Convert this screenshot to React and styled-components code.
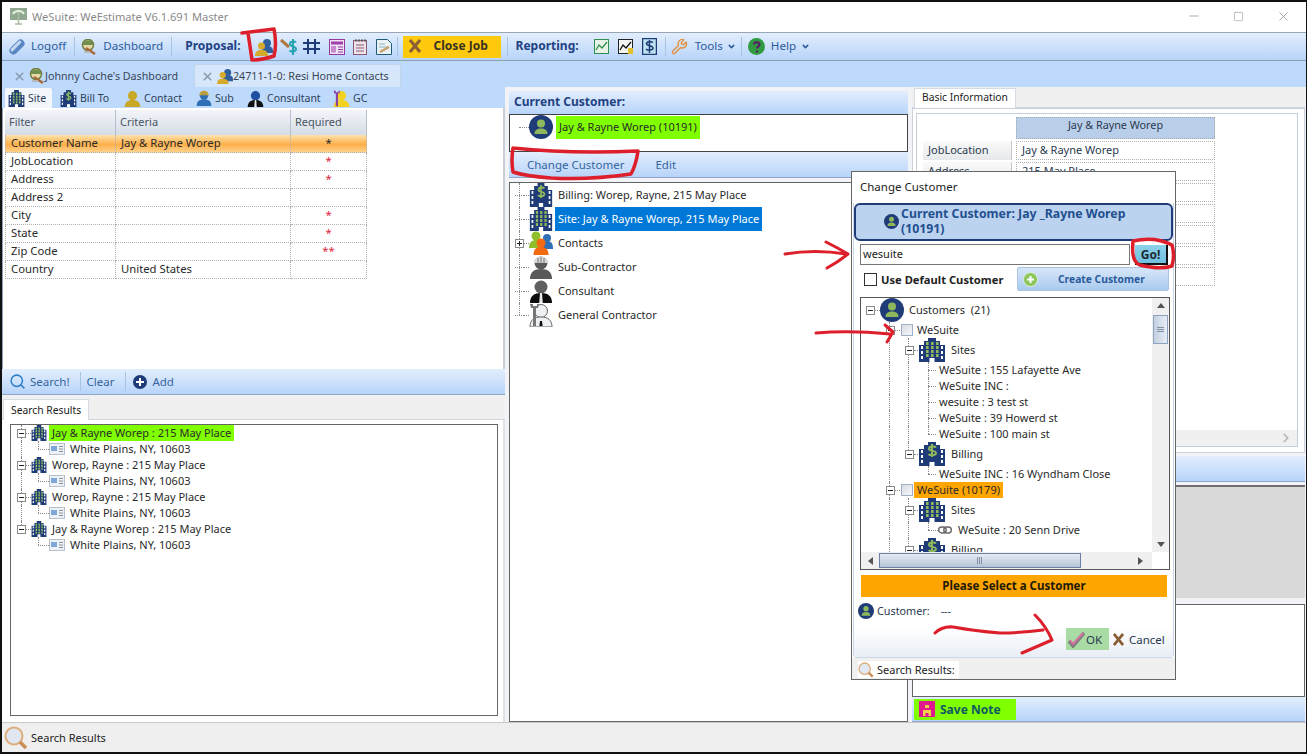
import React from "react";
import styled, { createGlobalStyle } from "styled-components";
import { X, Minus, Square, Search, Wrench, ChevronRight, ChevronDown } from "lucide-react";

const GlobalStyle = createGlobalStyle`
  html, body { margin: 0; padding: 0; background: #fff; overflow: hidden; }
  * { box-sizing: border-box; }
  body { font-family: "Noto Sans", "Open Sans", sans-serif; font-size: 11px; color: #222; }
`;

const NAVY = "#1f3c78";
const LEAF = "#8fb85c";
const BAR = "linear-gradient(#e2eefd, #b8d4fa)";

const Page = styled.div`
  position: relative;
  width: 1307px;
  height: 754px;
  display: flex;
  flex-direction: column;
  border: 2px solid #111;
  border-right-width: 1px;
  background: #f0f0f0;
  overflow: hidden;
`;

const TitleBar = styled.div`
  height: 30px;
  flex: none;
  display: flex;
  align-items: center;
  padding: 0 0 2px 8px;
  background: #fff;
  color: #8a8a8a;
  font-size: 11.1px;
`;
const TitleText = styled.span`margin-left: 5px; flex: 1;`;
const WinButton = styled.span`
  width: 45px;
  display: flex;
  justify-content: center;
  color: #777;
`;

const Toolbar = styled.div`
  height: 29px;
  flex: none;
  display: flex;
  align-items: center;
  padding-left: 6px;
  border-top: 1px solid #97a5b5;
  border-bottom: 1px solid #8e9fb3;
  background: ${BAR};
`;
const Slot = styled.span`
  display: inline-flex;
  flex: none;
  margin-left: ${(p) => p.$ml || 0}px;
`;
const ToolLabel = styled.span`
  flex: none;
  margin-left: ${(p) => p.$ml || 0}px;
  padding-bottom: 2px;
  color: ${(p) => (p.$bold ? "#1f4283" : "#2c5b9b")};
  font-weight: ${(p) => (p.$bold ? 700 : 400)};
  font-size: ${(p) => (p.$bold ? 12 : 11.6)}px;
`;
const Sep = styled.span`
  width: 1px;
  height: 19px;
  flex: none;
  margin-left: ${(p) => p.$ml || 0}px;
  background: #a9c3e2;
`;
const CloseJob = styled.div`
  width: 98px;
  height: 22px;
  flex: none;
  margin-left: ${(p) => p.$ml || 0}px;
  display: flex;
  align-items: center;
  gap: 13px;
  padding: 0 0 2px 6px;
  background: #ffc90e;
  color: #3a3320;
  font-weight: 700;
  font-size: 12px;
`;

const DocTabs = styled.div`
  height: 26px;
  flex: none;
  display: flex;
  align-items: flex-end;
  padding-left: 10px;
  background: #bddafd;
`;
const DocTab = styled.div`
  display: flex;
  align-items: center;
  height: 23px;
  width: ${(p) => p.$w}px;
  padding-left: ${(p) => p.$pad || 0}px;
  white-space: nowrap;
  font-size: 10.7px;
  color: #3a4658;
  background: ${(p) => (p.$active ? "#d6e6fb" : "transparent")};
  border-radius: 3px 3px 0 0;
  border: ${(p) => (p.$active ? "1px solid #c3d5ea" : "1px solid transparent")};
  border-bottom: 0;
`;

const Main = styled.div`
  flex: 1;
  min-height: 0;
  display: flex;
  background: #f1f3f6;
`;
const LeftCol = styled.div`
  width: 503px;
  flex: none;
  display: flex;
  flex-direction: column;
`;
const MidCol = styled.div`
  width: 399px;
  flex: none;
  margin-left: 4px;
  padding-top: 4px;
  display: flex;
  flex-direction: column;
`;
const RightCol = styled.div`
  width: 393px;
  flex: none;
  margin-left: 4px;
  display: flex;
  flex-direction: column;
`;

const SubTabs = styled.div`
  height: 21px;
  flex: none;
  display: flex;
  align-items: flex-end;
  padding-left: 3px;
  background: #bddafd;
`;
const SubTab = styled.div`
  height: 20px;
  display: flex;
  align-items: center;
  gap: 3px;
  width: ${(p) => p.$w}px;
  padding-left: 3px;
  margin-left: ${(p) => p.$ml || 0}px;
  color: #2d3e55;
  font-size: 10.5px;
  background: ${(p) => (p.$active ? "#f3f7fc" : "transparent")};
  border-radius: 2px 2px 0 0;
`;
const FilterPanel = styled.div`
  height: 261px;
  flex: none;
  padding: 2px 0 0 2px;
  background: #fff;
  border-left: 1px solid #8fa0b5;
  border-right: 2px solid #c8ced6;
`;
const GridTable = styled.div`
  width: 362px;
  display: grid;
  grid-template-columns: 111px 175px 76px;
  grid-template-rows: 25px;
  grid-auto-rows: 18px;
`;
const HeadCell = styled.div`
  display: flex;
  align-items: center;
  padding: 0 0 2px 4px;
  color: #4a5566;
  font-size: 11px;
  background: linear-gradient(#f3f5f9, #d5dce6);
  border-right: 1px solid #b6bfcb;
`;
const Cell = styled.div`
  display: flex;
  align-items: center;
  justify-content: ${(p) => (p.$center ? "center" : "flex-start")};
  padding: 0 0 2px ${(p) => (p.$center ? 0 : 5)}px;
  font-size: 11.3px;
  color: ${(p) => (p.$red ? "#e0243c" : "#2a2a2a")};
  background: ${(p) => (p.$on ? "linear-gradient(#fde3ae, #fdb04a 55%, #fdd08b)" : "#fff")};
  border-right: 1px dotted #b0b0b0;
  border-bottom: 1px dotted #b0b0b0;
  &:nth-child(3n + 1) { border-left: 1px dotted #b0b0b0; }
`;

const BlueBar = styled.div`
  height: ${(p) => p.$h || 26}px;
  flex: none;
  margin-top: ${(p) => p.$mt || 0}px;
  display: flex;
  align-items: center;
  padding-left: ${(p) => p.$pad || 0}px;
  background: ${BAR};
  border-bottom: 1px solid #8ea7c8;
`;
const BarLink = styled.span`
  margin-left: ${(p) => p.$ml || 0}px;
  color: #35669f;
  font-size: 11.5px;
`;
const TabStrip = styled.div`
  height: ${(p) => p.$h || 25}px;
  flex: none;
  display: flex;
  align-items: flex-end;
  padding-left: ${(p) => p.$pad || 0}px;
  background: #f0f0f0;
  border-bottom: 1px solid #cfd6de;
`;
const PlainTab = styled.div`
  height: ${(p) => p.$h || 21}px;
  display: flex;
  align-items: center;
  padding: 0 7px ${(p) => (p.$h ? 3 : 0)}px;
  margin-bottom: -1px;
  color: #222;
  font-size: 10.3px;
  background: #fff;
  border: 1px solid #d5dbe2;
  border-bottom: 0;
`;
const ResultsPanel = styled.div`
  flex: 1;
  min-height: 0;
  display: flex;
  padding: 4px 5px 6px 8px;
  background: #fff;
  border-right: 2px solid #dfe3e8;
`;
const TreeBox = styled.div`
  flex: 1;
  min-width: 0;
  overflow: hidden;
  background: #fff;
  border: 1px solid #666;
`;

const Row = styled.div`
  position: relative;
  height: ${(p) => p.$h}px;
  display: flex;
  align-items: center;
  padding-left: ${(p) => p.$indent}px;
  white-space: pre;
  font-size: 11px;
  color: #2a2a2a;
`;
const Guide = styled.i`
  position: absolute;
  left: ${(p) => p.$x}px;
  top: 0;
  height: ${(p) => (p.$half ? "50%" : "100%")};
  border-left: 1px dotted #888;
`;
const Expander = styled.span`
  position: relative;
  width: 9px;
  height: 9px;
  flex: none;
  background: #fff;
  border: 1px solid #8a8a8a;
  &::before {
    content: "";
    position: absolute;
    left: 1px;
    right: 1px;
    top: 3px;
    height: 1px;
    background: #222;
  }
  &::after {
    content: "";
    display: ${(p) => (p.$closed ? "block" : "none")};
    position: absolute;
    top: 1px;
    bottom: 1px;
    left: 3px;
    width: 1px;
    background: #222;
  }
`;
const Stub = styled.span`
  width: ${(p) => p.$w}px;
  flex: none;
  border-bottom: 1px dotted #888;
`;
const NodeLabel = styled.span`
  display: flex;
  align-items: center;
  flex: none;
  height: ${(p) => p.$lh || 16}px;
  margin-left: ${(p) => p.$ml ?? 1}px;
  padding: 0 3px 2px;
  background: ${(p) => p.$bg || "transparent"};
  color: ${(p) => p.$color || "inherit"};
`;
const RowIcon = styled.span`
  display: inline-flex;
  flex: none;
  margin-left: ${(p) => p.$ml || 0}px;
`;
const TreeCheck = styled.span`
  width: 12px;
  height: 12px;
  flex: none;
  margin-left: 1px;
  background: linear-gradient(135deg, #d8dce2, #f6f7f9);
  border: 1px solid #9fb0c8;
`;

const CurrentHead = styled.div`
  height: 23px;
  flex: none;
  display: flex;
  align-items: center;
  padding: 0 0 2px 5px;
  background: ${BAR};
  color: #1f4283;
  font-weight: 700;
  font-size: 12px;
  border-radius: 3px 3px 0 0;
`;
const CurrentBox = styled.div`
  height: 38px;
  flex: none;
  background: #fff;
  border: 1px solid #444;
`;
const TabGap = styled.div`
  height: 4px;
  flex: none;
`;

const BasicPanel = styled.div`
  height: 345px;
  flex: none;
  padding: 4px 6px 5px 3px;
  background: #fff;
  border: 1px solid #c9d2da;
`;
const BasicInner = styled.div`
  height: 100%;
  display: flex;
  flex-direction: column;
  border: 1px solid #c3d0db;
`;
const BasicBody = styled.div`
  flex: 1;
  padding: 3px 0 0 6px;
  display: grid;
  grid-template-columns: 93px 199px;
  grid-template-rows: 22px;
  grid-auto-rows: 19px;
  row-gap: 2px;
  align-content: start;
`;
const BasicHead = styled.div`
  grid-column: 2;
  display: flex;
  justify-content: center;
  align-items: flex-start;
  font-size: 10.8px;
  line-height: 13px;
  color: #2a3a50;
  background: #b9cfe9;
  border: 1px dotted #a0a8b0;
`;
const BasicLabel = styled.div`
  display: flex;
  align-items: center;
  padding: 0 0 2px 5px;
  font-size: 11px;
  color: #2a3a50;
  background: linear-gradient(#fafafa, #e6e8eb);
  border-right: 1px solid #c5c9ce;
  margin-right: 4px;
`;
const BasicValue = styled.div`
  display: flex;
  align-items: center;
  padding: 0 0 3px 5px;
  font-size: 11px;
  color: #2a3a50;
  border: 1px dotted #b0b0b0;
`;
const HScrollFaint = styled.div`
  height: 16px;
  flex: none;
  display: flex;
  justify-content: flex-end;
  align-items: center;
  padding-right: 4px;
  color: #b5b5b5;
  background: #f0f0f0;
`;
const GreyArea = styled.div`
  height: 113px;
  flex: none;
  margin-top: 3px;
  background: #d9d9d9;
  border-top: 2px solid #6f6f6f;
`;
const NoteBox = styled.div`
  height: 93px;
  flex: none;
  margin-top: 6px;
  background: #fff;
  border: 1px solid #666;
`;
const SaveNote = styled.div`
  width: 102px;
  height: 21px;
  margin-left: 2px;
  display: flex;
  align-items: center;
  gap: 5px;
  padding-left: 5px;
  background: #7fff00;
  color: #0f5a62;
  font-weight: 700;
  font-size: 12px;
`;

const StatusBar = styled.div`
  height: 30px;
  flex: none;
  display: flex;
  align-items: center;
  gap: 3px;
  padding-left: 2px;
  font-size: 11px;
  color: #222;
  background: #efefef;
  border-top: 1px solid #c9c9c9;
`;

/* change customer dialog */
const Dialog = styled.div`
  position: absolute;
  left: 849px;
  top: 169px;
  width: 325px;
  height: 509px;
  display: flex;
  flex-direction: column;
  background: #fff;
  border: 1px solid #666;
`;
const DialogTitle = styled.div`
  height: 31px;
  flex: none;
  display: flex;
  align-items: center;
  padding: 0 0 2px 8px;
  font-size: 11.5px;
  color: #222;
`;
const DialogBody = styled.div`
  height: 455px;
  flex: none;
  margin: 0 1px;
  display: flex;
  flex-direction: column;
  border-right: 1px solid #c8d8ea;
  border-left: 1px solid #c8d8ea;
  border-bottom: 1px solid #c8d8ea;
  border-radius: 0 0 4px 4px;
`;
const CurrentBanner = styled.div`
  height: 38px;
  flex: none;
  display: flex;
  align-items: center;
  gap: 2px;
  padding: 0 0 2px 28px;
  font-size: 12.3px;
  font-weight: 700;
  line-height: 15px;
  color: #23508f;
  background: #bcd3ef;
  border: 2px solid #1f3c78;
  border-radius: 6px;
`;
const SearchRow = styled.div`
  display: flex;
  margin: 3px 0 0 6px;
  height: 22px;
  flex: none;
`;
const SearchInput = styled.div`
  width: 270px;
  height: 21px;
  display: flex;
  align-items: center;
  padding: 0 0 2px 2px;
  font-size: 11px;
  color: #222;
  border: 1px solid #777;
`;
const GoButton = styled.div`
  width: 33px;
  height: 20px;
  margin: 1px 0 0 5px;
  display: flex;
  align-items: center;
  justify-content: center;
  font-weight: 700;
  font-size: 12px;
  color: #1c2b33;
  background: linear-gradient(#8ed2ea, #6fc0e0);
  border-right: 2px solid #111;
  border-bottom: 2px solid #111;
`;
const OptionRow = styled.div`
  display: flex;
  align-items: center;
  height: 24px;
  flex: none;
  margin: 1px 0 0 10px;
`;
const DefaultCheck = styled.span`
  width: 13px;
  height: 13px;
  flex: none;
  border: 1px solid #333;
  background: #fff;
`;
const DefaultLabel = styled.span`
  margin-left: 4px;
  width: 136px;
  flex: none;
  font-weight: 700;
  font-size: 11.2px;
  color: #222;
`;
const CreateButton = styled.div`
  width: 152px;
  height: 24px;
  display: flex;
  align-items: center;
  padding-left: 5px;
  font-weight: 700;
  font-size: 10.3px;
  color: #2b5a9c;
  background: linear-gradient(#d7e6f8, #a9cbef);
  border: 1px solid #a9c3e2;
  border-radius: 2px;
`;
const CreateText = styled.span`margin-left: 20px;`;
const ModalTree = styled.div`
  width: 310px;
  height: 273px;
  flex: none;
  margin: 6px 0 0 6px;
  display: grid;
  grid-template-columns: 1fr 17px;
  grid-template-rows: 1fr 17px;
  background: #fff;
  border: 1px solid #555;
`;
const ModalTreeScroll = styled.div`
  overflow: hidden;
  min-width: 0;
`;
const VScroll = styled.div`
  display: flex;
  flex-direction: column;
  align-items: center;
  background: #f0f0f0;
  color: #555;
`;
const VThumb = styled.div`
  width: 15px;
  height: 29px;
  margin-top: 7px;
  display: flex;
  align-items: center;
  justify-content: center;
  background: linear-gradient(90deg, #c3cfe0, #e8eef7);
  border: 1px solid #8ea3bf;
`;
const ThumbGrip = styled.span`
  width: ${(p) => (p.$h ? 6 : 7)}px;
  height: ${(p) => (p.$h ? 7 : 6)}px;
  background: ${(p) =>
    p.$h
      ? "repeating-linear-gradient(90deg, #7f8fa5 0 1px, transparent 1px 2px)"
      : "repeating-linear-gradient(#7f8fa5 0 1px, transparent 1px 2px)"};
`;
const HScroll = styled.div`
  display: flex;
  align-items: center;
  background: #f0f0f0;
`;
const HThumb = styled.div`
  width: 202px;
  height: 15px;
  margin-left: 6px;
  display: flex;
  align-items: center;
  justify-content: center;
  background: linear-gradient(#e5ebf3, #b6c4d6);
  border: 1px solid #6a80a5;
`;
const ScrollCorner = styled.div`background: #fff;`;
const ArrowBox = styled.span`
  flex: none;
  width: 0;
  height: 0;
  margin-left: ${(p) => p.$ml || 0}px;
  margin-top: ${(p) => p.$mt || 0}px;
  border-style: solid;
  border-color: transparent;
  ${(p) => p.$dir === "up" && "border-width: 0 4px 5px; border-bottom-color: #555;"}
  ${(p) => p.$dir === "down" && "border-width: 5px 4px 0; border-top-color: #555;"}
  ${(p) => p.$dir === "left" && "border-width: 4px 5px 4px 0; border-right-color: #555;"}
  ${(p) => p.$dir === "right" && "border-width: 4px 0 4px 5px; border-left-color: #555;"}
`;
const SelectBar = styled.div`
  width: 306px;
  height: 22px;
  flex: none;
  margin: 5px 0 0 7px;
  padding-bottom: 2px;
  display: flex;
  align-items: center;
  justify-content: center;
  font-weight: 700;
  font-size: 11.5px;
  color: #201a08;
  background: #ffa500;
`;
const CustomerRow = styled.div`
  height: 16px;
  flex: none;
  margin: 6px 0 0 4px;
  display: flex;
  align-items: center;
  font-size: 10.8px;
  color: #2a3a50;
`;
const CustomerDash = styled.span`margin-left: 8px; padding-bottom: 2px;`;
const DialogFooter = styled.div`
  flex: 1;
  margin-top: 9px;
  display: flex;
  justify-content: flex-end;
  align-items: flex-start;
  padding-right: 6px;
  background: linear-gradient(#fff, #e9eef5);
`;
const OkButton = styled.div`
  width: 43px;
  height: 22px;
  display: flex;
  align-items: center;
  gap: 1px;
  padding-left: 2px;
  font-size: 11.5px;
  color: #2a3a50;
  background: #a9dca4;
`;
const CancelButton = styled.div`
  width: 58px;
  display: flex;
  height: 22px;
  align-items: center;
  gap: 5px;
  padding-left: 4px;
  font-size: 11.5px;
  color: #2a3a50;
`;
const DialogStatus = styled.div`
  flex: 1;
  display: flex;
  padding-left: 6px;
  background: #f0f0f0;
`;
const StatusChip = styled.div`
  width: 101px;
  height: 17px;
  margin-top: 3px;
  display: flex;
  align-items: center;
  gap: 3px;
  font-size: 11px;
  color: #222;
  background: #fff;
`;
const Scribbles = styled.svg`
  position: absolute;
  left: -2px;
  top: -2px;
  pointer-events: none;
`;

/* icons */
const Building = ({ w = 24, h = 24, money }) => (
  <svg width={w} height={h} viewBox="0 0 28 24" preserveAspectRatio="none">
    <path d="M1 24V7h5V3h4V0h8v3h4v4h5v17z" fill={NAVY} />
    {[9, 14, 19].map((y) => (
      <g key={y} fill="#fff">
        <rect x="3" y={y - 1} width="2" height="3" />
        <rect x="23" y={y - 1} width="2" height="3" />
      </g>
    ))}
    {money ? (
      <path d="M18 5.5c-1-1.4-7-1.6-7 1.2s7 1.6 7 4.4-6 2.6-7.4 1M14 2v13" fill="none" stroke={LEAF} strokeWidth="2" />
    ) : (
      [8, 13, 18].map((x) =>
        [4, 8, 12, 16].map((y) => <rect key={`${x}-${y}`} x={x} y={y} width="2.6" height="3" fill={LEAF} />)
      )
    )}
    <rect x="11.5" y="20" width="5" height="4" fill="#fff" />
  </svg>
);

const CirclePerson = ({ size = 24 }) => (
  <svg width={size} height={size} viewBox="0 0 24 24">
    <circle cx="12" cy="12" r="12" fill={NAVY} />
    <circle cx="12" cy="8.5" r="4" fill={LEAF} />
    <path d="M5.5 19c0-4 3-5.5 6.5-5.5s6.500 1.500 6.500 5.500z" fill={LEAF} />
  </svg>
);

const Person = ({ size = 16, color = "#c9a825", body, line, extra }) => (
  <svg width={size} height={size} viewBox="0 0 24 24">
    <circle cx="12" cy="8" r="6.500" fill={color} stroke={line} />
    <path d="M1 24c0-7 4-10 11-10s11 3 11 10z" fill={body || color} stroke={line} />
    {extra}
  </svg>
);

const Tie = () => <path d="M11 14h2l.8 10h-3.600z" fill="#e8e8e8" />;
const Helmet = ({ fill = "#d9d9d9" }) => (
  <g>
    <path d="M5 8c0-9 14-9 14 0z" fill={fill} />
    <path d="M9 3v5M12 2v6M15 3v5" stroke="#777" />
  </g>
);
const Wrench2 = ({ color = "#777" }) => (
  <path d="M1 1l1 4h2v18h3V5h2l1-4-2 0v2H4V1z" fill={color} />
);
const SmallTie = () => <path d="M11 18h2l.6 5h-3.200z" fill="#111" />;

const Contacts = () => (
  <svg width={24} height={24} viewBox="0 0 24 24">
    <circle cx="7" cy="5" r="4.500" fill="#8fbf2a" />
    <path d="M0 17c0-6 3-8 7-8s7 2 7 8z" fill="#8fbf2a" />
    <circle cx="18" cy="7" r="4" fill="#2f6fb5" />
    <path d="M12 18c0-6 2-8 6-8s6 2 6 8z" fill="#2f6fb5" />
    <circle cx="12" cy="12" r="4.500" fill="#f26a12" />
    <path d="M4.500 24c0-6 3-8 7.500-8s7.500 2 7.500 8z" fill="#f26a12" />
  </svg>
);

const Gloss = ({ size = 18 }) => (
  <svg width={size} height={size} viewBox="0 0 18 18">
    <g transform="rotate(-45 9 9)">
      <rect x="0" y="5" width="18" height="8" rx="4" fill="#5a86c4" />
      <rect x="2" y="6" width="14" height="3" rx="1.500" fill="#c6d8f0" />
    </g>
  </svg>
);

const Dash = ({ size = 16 }) => (
  <svg width={size} height={size} viewBox="0 0 16 16">
    <circle cx="7" cy="6" r="5.500" fill="#e9d9a8" stroke="#6f7f3f" strokeWidth="1.500" />
    <path d="M2 6c0-6 10-6 10 0z" fill="#6f8f4f" />
    <path d="M5 9l9 6" stroke="#a9683a" strokeWidth="2.500" />
    <path d="M3 13h6" stroke="#b8b8b8" strokeWidth="2" />
  </svg>
);

const ProposalIcon = ({ size = 18 }) => (
  <svg width={size} height={size} viewBox="0 0 18 18">
    <circle cx="12" cy="5" r="4" fill="#2f5f9f" />
    <path d="M7 13c0-4 2-5 5-5s6 1 6 5v2H7z" fill="#2f5f9f" />
    <circle cx="6.500" cy="8" r="3.500" fill="#d6ab2b" />
    <path d="M0 18c0-5 3-6 6.500-6s6.500 1 6.500 6z" fill="#d6ab2b" />
  </svg>
);

const MoneyTool = () => (
  <svg width={18} height={18} viewBox="0 0 18 18">
    <path d="M1 2l8 7" stroke="#b07a45" strokeWidth="3" />
    <path d="M16 4.500c-1-1.500-6-1.500-6 1.500s6 2 6 5-5 3-6.500 1.500M13 1v16" fill="none" stroke="#26a3b0" strokeWidth="2" />
  </svg>
);

const HashIcon = () => (
  <svg width={17} height={17} viewBox="0 0 17 17">
    <path d="M5 1v15M12 1v15M0 5h17M0 11h17" stroke={NAVY} strokeWidth="2" />
  </svg>
);

const PurpleDoc = () => (
  <svg width={16} height={16} viewBox="0 0 16 16">
    <rect x="0.500" y="0.500" width="15" height="15" fill="#efe3f5" stroke="#94399e" />
    <rect x="2" y="2.500" width="12" height="3" fill="#a040aa" />
    <rect x="2" y="7" width="5" height="6.500" fill="#c98ad0" />
    <path d="M9 8h5M9 10.500h5M9 13h5" stroke="#94399e" />
  </svg>
);

const NotePad = () => (
  <svg width={14} height={16} viewBox="0 0 14 16">
    <rect x="0.500" y="1.500" width="13" height="14" fill="#eee3e8" stroke="#8a5a7a" />
    <path d="M3 0v3M6 0v3M9 0v3M12 0v3" stroke="#555" />
    <path d="M3 6h8M3 9h8M3 12h8" stroke="#8a5a7a" />
  </svg>
);

const PencilDoc = () => (
  <svg width={16} height={16} viewBox="0 0 16 16">
    <path d="M.5.500h11l4 4v11H.500z" fill="#e9f1f5" stroke="#1f5a78" />
    <path d="M3 5h6M3 8h9" stroke="#8fb0c0" />
    <path d="M4 13l9-5" stroke="#c9a070" strokeWidth="2.500" />
  </svg>
);

const ChartIcon = ({ dark }) => (
  <svg width={15} height={15} viewBox="0 0 15 15">
    <rect x="0.500" y="0.500" width="14" height="14" fill={dark ? "#f4f4f4" : "#e7f3e7"} stroke={dark ? "#222" : "#2f8f4f"} />
    <path d="M2 11l3-5 3 3 5-6" fill="none" stroke={dark ? "#111" : "#2f8f4f"} strokeWidth="1.300" />
    {dark && <rect x="10" y="9" width="5" height="6" fill="#e3c02a" />}
  </svg>
);

const MoneyDoc = () => (
  <svg width={15} height={17} viewBox="0 0 15 17">
    <rect x="0.500" y="0.500" width="14" height="16" fill="#bde3ef" stroke={NAVY} strokeWidth="1.500" />
    <path d="M11 4.500c-1-1.200-6.500-1.200-6.500 1.200s6.500 1.600 6.500 4.400-5.500 2.200-7 1M7.500 2v13" fill="none" stroke={NAVY} strokeWidth="1.500" />
  </svg>
);

const HelpIcon = () => (
  <svg width={17} height={17} viewBox="0 0 17 17">
    <circle cx="8.500" cy="8.500" r="8.500" fill="#2f9a3f" />
    <path d="M6 6.500c0-3 5.500-3 5.500 0 0 2-2.500 2-2.500 4M9 12.500v2" fill="none" stroke="#5a1a6a" strokeWidth="2" />
  </svg>
);

const BrownX = ({ size = 12 }) => (
  <svg width={size} height={size + 2} viewBox="0 0 12 14">
    <path d="M1 1l10 12M11 1L1 13" stroke="#8a5f35" strokeWidth="3" />
  </svg>
);

const PinkCheck = () => (
  <svg width={17} height={17} viewBox="0 0 17 17">
    <path d="M1 10l4 5L16 2" fill="none" stroke="#7d7d7d" strokeWidth="3.500" />
    <path d="M2 9l3 4L15 2" fill="none" stroke="#d873a0" strokeWidth="2" />
  </svg>
);

const Magnifier = ({ size = 24 }) => (
  <svg width={size} height={size} viewBox="0 0 24 24">
    <circle cx="10" cy="10" r="8.500" fill="#e2e8f2" stroke="#dcae7c" strokeWidth="2" />
    <path d="M16 16l6 6" stroke="#c98f55" strokeWidth="3.500" />
  </svg>
);

const AddIcon = () => (
  <svg width={14} height={14} viewBox="0 0 14 14">
    <circle cx="7" cy="7" r="7" fill={NAVY} />
    <path d="M7 3v8M3 7h8" stroke="#fff" strokeWidth="2" />
  </svg>
);

const GreenPlus = () => (
  <svg width={15} height={15} viewBox="0 0 15 15">
    <circle cx="7.500" cy="7.500" r="7" fill="#8cc65a" stroke="#dfeedd" />
    <path d="M7.500 4v7M4 7.500h7" stroke="#fff" strokeWidth="2" />
  </svg>
);

const CardIcon = () => (
  <svg width={16} height={12} viewBox="0 0 16 12">
    <rect x="0.500" y="0.500" width="15" height="11" fill="#eef1f5" stroke="#b9c0c9" />
    <rect x="2" y="3" width="6" height="5" fill="#7fa8d6" />
    <path d="M10 3.500h4M10 6h4M10 8.500h4" stroke="#8a94a0" />
  </svg>
);

const ChainIcon = () => (
  <svg width={14} height={8} viewBox="0 0 14 8">
    <rect x="0.700" y="1" width="7.500" height="6" rx="3" fill="none" stroke="#666" strokeWidth="1.400" />
    <rect x="5.800" y="1" width="7.500" height="6" rx="3" fill="none" stroke="#666" strokeWidth="1.400" />
  </svg>
);

const LogoMark = () => (
  <svg width={17} height={18} viewBox="0 0 17 18">
    <rect x="0" y="1" width="17" height="12" fill="#8fa88f" />
    <path d="M3 7c2-4 9-4 11 0" fill="none" stroke="#e8f0e0" strokeWidth="2" />
    <path d="M8.500 5v12M5 17h7" stroke="#a9bda0" strokeWidth="1.500" />
  </svg>
);

const SaveIcon = () => (
  <svg width={16} height={16} viewBox="0 0 16 16">
    <rect width="16" height="16" fill="#e01a8c" />
    <rect x="6" y="4" width="4" height="3" fill="#f4d04a" />
    <path d="M4 15V9h8v6h-2.500v-3h-3v3z" fill="#f4d04a" />
  </svg>
);

const CloseSmall = () => <X size={13} strokeWidth={3} color="#8c9bb0" />;

/* data */
const filters = [
  { name: "Customer Name", value: "Jay & Rayne Worep", req: "*", on: true },
  { name: "JobLocation", value: "", req: "*" },
  { name: "Address", value: "", req: "*" },
  { name: "Address 2", value: "", req: "" },
  { name: "City", value: "", req: "*" },
  { name: "State", value: "", req: "*" },
  { name: "Zip Code", value: "", req: "**" },
  { name: "Country", value: "United States", req: "" },
];

const results = [
  { title: "Jay & Rayne Worep : 215 May Place", bg: "#7fff00" },
  { title: "Worep, Rayne : 215 May Place" },
  { title: "Worep, Rayne : 215 May Place" },
  { title: "Jay & Rayne Worep : 215 May Place" },
];

const basicRows = [
  ["JobLocation", "Jay & Rayne Worep"],
  ["Address", "215 May Place"],
  ["Address 2", ""],
  ["City", ""],
  ["State", ""],
  ["Zip Code", ""],
  ["Country", ""],
];

const SearchResults = () => (
  <TreeBox>
    {results.map((r, i) => (
      <React.Fragment key={i}>
        <Row $h={16} $indent={6}>
          {i < results.length - 1 ? <Guide $x={10} /> : <Guide $x={10} $half />}
          <Expander />
          <Stub $w={5} />
          <RowIcon $ml={0}><Building w={16} h={16} /></RowIcon>
          <NodeLabel $bg={r.bg} $ml={2}>{r.title}</NodeLabel>
        </Row>
        <Row $h={16} $indent={27}>
          {i < results.length - 1 && <Guide $x={10} />}
          <Guide $x={27} $half />
          <Stub $w={11} />
          <RowIcon><CardIcon /></RowIcon>
          <NodeLabel $ml={2}>White Plains, NY, 10603</NodeLabel>
        </Row>
      </React.Fragment>
    ))}
  </TreeBox>
);

const jobTree = [
  { icon: <Building money />, label: "Billing: Worep, Rayne, 215 May Place" },
  { icon: <Building />, label: "Site: Jay & Rayne Worep, 215 May Place", selected: true },
  { icon: <Contacts />, label: "Contacts", closed: true },
  { icon: <Person size={24} color="#5a5a5a" extra={<Helmet />} />, label: "Sub-Contractor" },
  { icon: <Person size={24} color="#5f5f5f" body="#0c0c0c" extra={<Tie />} />, label: "Consultant" },
  {
    icon: <Person size={24} color="#eef0f3" line="#666" extra={<><Wrench2 /><SmallTie /></>} />,
    label: "General Contractor",
    last: true,
  },
];

const JobTree = () => (
  <TreeBox>
    {jobTree.map((n, i) => (
      <Row key={n.label} $h={24} $indent={5}>
        <Guide $x={9} $half={n.last} />
        {n.closed ? <Expander $closed /> : <Stub $w={9} />}
        <Stub $w={5} />
        <RowIcon>{n.icon}</RowIcon>
        <NodeLabel
          $ml={2}
          $lh={i === 1 ? 24 : 16}
          $bg={n.selected ? "#0078d7" : undefined}
          $color={n.selected ? "#fff" : undefined}
        >
          {n.label}
        </NodeLabel>
      </Row>
    ))}
  </TreeBox>
);

const leaf = (label, extra = {}) => ({ h: 16, indent: 67, stub: 8, label, guides: [28, 47, 67], ...extra });
const branch = (label, money, extra = {}) => ({
  h: 24,
  indent: 44,
  exp: true,
  stub: 4,
  icon: <Building w={28} h={24} money={money} />,
  label,
  guides: [28, 47],
  ml: 2,
  ...extra,
});

const customerTree = [
  { h: 24, indent: 5, exp: true, stub: 5, icon: <CirclePerson />, label: "Customers  (21)", ml: 2 },
  { h: 16, indent: 25, exp: true, stub: 5, check: true, label: "WeSuite", guides: [28], ml: 1 },
  branch("Sites"),
  leaf("WeSuite : 155 Lafayette Ave"),
  leaf("WeSuite INC :"),
  leaf("wesuite : 3 test st"),
  leaf("WeSuite : 39 Howerd st"),
  leaf("WeSuite : 100 main st", { halfAt: 67 }),
  branch("Billing", true, { halfAt: 47 }),
  leaf("WeSuite INC : 16 Wyndham Close", { guides: [28, 67], halfAt: 67 }),
  { h: 16, indent: 25, exp: true, stub: 5, check: true, label: "WeSuite (10179)", bg: "#ffa500", guides: [28], ml: 1 },
  branch("Sites"),
  leaf("WeSuite : 20 Senn Drive", { chain: true, stub: 10, ml: 3, halfAt: 67 }),
  branch("Billing", true),
];

const CustomerTree = () => (
  <ModalTree>
    <ModalTreeScroll>
      {customerTree.map((n, i) => (
        <Row key={i} $h={n.h} $indent={n.indent}>
          {(n.guides || []).map((x) => (
            <Guide key={x} $x={x} $half={x === n.halfAt} />
          ))}
          {n.exp && <Expander />}
          <Stub $w={n.stub} />
          {n.check && <TreeCheck />}
          {n.icon && <RowIcon>{n.icon}</RowIcon>}
          {n.chain && <RowIcon><ChainIcon /></RowIcon>}
          <NodeLabel $ml={n.ml ?? 0} $bg={n.bg}>{n.label}</NodeLabel>
        </Row>
      ))}
    </ModalTreeScroll>
    <VScroll>
      <ArrowBox $dir="up" $mt={5} />
      <VThumb><ThumbGrip /></VThumb>
      <ArrowBox $dir="down" $mt={198} />
    </VScroll>
    <HScroll>
      <ArrowBox $dir="left" $ml={7} />
      <HThumb><ThumbGrip $h /></HThumb>
      <ArrowBox $dir="right" $ml={57} />
    </HScroll>
    <ScrollCorner />
  </ModalTree>
);

const redStroke = { fill: "none", stroke: "#dc1f2b", strokeLinecap: "round", strokeLinejoin: "round" };

const Annotations = () => (
  <Scribbles width="1307" height="754" viewBox="0 0 1307 754">
    <g {...redStroke} strokeWidth="3.500">
      <path d="M242 33Q258 31 274 29Q277 44 274 56Q262 60 252 60Q250 46 248 33" />
      <path d="M513 148Q570 154 638 151Q636 165 631 174Q590 180 551 178Q525 176 513 172Q511 160 513 148" />
      <path d="M1133 242Q1131 262 1140 265Q1160 270 1172 266Q1175 255 1172 245Q1155 236 1133 241" />
    </g>
    <g {...redStroke} strokeWidth="3">
      <path d="M785 254Q815 249 846 254M826 242Q838 248 848 254Q838 262 827 268" />
      <path d="M816 333Q850 330 890 334M885 325L893 332L887 342" />
      <path d="M935 633Q942 626 953 627Q975 631 1000 633Q1022 633 1043 630M1035 615Q1046 626 1052 640Q1038 646 1022 653" />
    </g>
  </Scribbles>
);

export default function App() {
  return (
    <>
      <GlobalStyle />
      <Page>
        <TitleBar>
          <LogoMark />
          <TitleText>WeSuite: WeEstimate V6.1.691 Master</TitleText>
          <WinButton><Minus size={14} strokeWidth={1} /></WinButton>
          <WinButton><Square size={11} strokeWidth={1} /></WinButton>
          <WinButton><X size={15} strokeWidth={1} /></WinButton>
        </TitleBar>

        <Toolbar>
          <Slot><Gloss /></Slot>
          <ToolLabel $ml={5}>Logoff</ToolLabel>
          <Sep $ml={8} />
          <Slot $ml={6}><Dash /></Slot>
          <ToolLabel $ml={6}>Dashboard</ToolLabel>
          <Sep $ml={8} />
          <ToolLabel $ml={13} $bold>Proposal:</ToolLabel>
          <Slot $ml={14}><ProposalIcon /></Slot>
          <Slot $ml={7}><MoneyTool /></Slot>
          <Slot $ml={5}><HashIcon /></Slot>
          <Slot $ml={9}><PurpleDoc /></Slot>
          <Slot $ml={8}><NotePad /></Slot>
          <Slot $ml={9}><PencilDoc /></Slot>
          <Sep $ml={5} />
          <CloseJob $ml={5}><BrownX />Close Job</CloseJob>
          <Sep $ml={6} />
          <ToolLabel $ml={8} $bold>Reporting:</ToolLabel>
          <Slot $ml={15}><ChartIcon /></Slot>
          <Slot $ml={9}><ChartIcon dark /></Slot>
          <Slot $ml={9}><MoneyDoc /></Slot>
          <Sep $ml={8} />
          <Slot $ml={5}><Wrench size={17} color="#e0913e" /></Slot>
          <ToolLabel $ml={7}>Tools</ToolLabel>
          <Slot $ml={4}><ChevronDown size={9} strokeWidth={4} color="#2c5b9b" /></Slot>
          <Sep $ml={5} />
          <Slot $ml={6}><HelpIcon /></Slot>
          <ToolLabel $ml={6}>Help</ToolLabel>
          <Slot $ml={5}><ChevronDown size={9} strokeWidth={4} color="#2c5b9b" /></Slot>
        </Toolbar>

        <DocTabs>
          <DocTab $w={182}>
            <CloseSmall />
            <RowIcon $ml={3}><Dash /></RowIcon>
            Johnny Cache's Dashboard
          </DocTab>
          <DocTab $w={207} $pad={6} $active>
            <CloseSmall />
            <RowIcon $ml={3}><ProposalIcon size={16} /></RowIcon>
            24711-1-0: Resi Home Contacts
          </DocTab>
        </DocTabs>

        <Main>
          <LeftCol>
            <SubTabs>
              <SubTab $w={47} $active><Building w={17} h={17} />Site</SubTab>
              <SubTab $w={64} $ml={5}><Building w={17} h={17} money />Bill To</SubTab>
              <SubTab $w={72}><Person size={17} />Contact</SubTab>
              <SubTab $w={51}><Person size={16} color="#2f6fb5" extra={<Helmet fill="#d6ab2b" />} />Sub</SubTab>
              <SubTab $w={86}><Person size={17} color="#1f4f9f" body="#111" extra={<Tie />} />Consultant</SubTab>
              <SubTab $w={40}><Person size={17} color="#f2d21f" extra={<Wrench2 color="#8a3f9f" />} />GC</SubTab>
            </SubTabs>
            <FilterPanel>
              <GridTable>
                <HeadCell>Filter</HeadCell>
                <HeadCell>Criteria</HeadCell>
                <HeadCell>Required</HeadCell>
                {filters.map((f) => (
                  <React.Fragment key={f.name}>
                    <Cell $on={f.on}>{f.name}</Cell>
                    <Cell $on={f.on}>{f.value}</Cell>
                    <Cell $on={f.on} $center $red={!f.on}>{f.req}</Cell>
                  </React.Fragment>
                ))}
              </GridTable>
            </FilterPanel>
            <BlueBar $pad={7}>
              <Search size={17} color="#2f7fc8" strokeWidth={2.2} />
              <BarLink $ml={4}>Search!</BarLink>
              <Sep $ml={10} />
              <BarLink $ml={6}>Clear</BarLink>
              <Sep $ml={11} />
              <Slot $ml={7}><AddIcon /></Slot>
              <BarLink $ml={5}>Add</BarLink>
            </BlueBar>
            <TabStrip $pad={1}>
              <PlainTab>Search Results</PlainTab>
            </TabStrip>
            <ResultsPanel>
              <SearchResults />
            </ResultsPanel>
          </LeftCol>

          <MidCol>
            <CurrentHead>Current Customer:</CurrentHead>
            <CurrentBox>
              <Row $h={24} $indent={9}>
                <Stub $w={10} />
                <RowIcon><CirclePerson /></RowIcon>
                <NodeLabel $ml={3} $lh={23} $bg="#7fff00">Jay & Rayne Worep (10191)</NodeLabel>
              </Row>
            </CurrentBox>
            <BlueBar $pad={18}>
              <BarLink>Change Customer</BarLink>
              <BarLink $ml={31}>Edit</BarLink>
            </BlueBar>
            <TabGap />
            <JobTree />
          </MidCol>

          <RightCol>
            <TabStrip $h={21} $pad={2}>
              <PlainTab $h={20}>Basic Information</PlainTab>
            </TabStrip>
            <BasicPanel>
              <BasicInner>
                <BasicBody>
                  <span />
                  <BasicHead>Jay & Rayne Worep</BasicHead>
                  {basicRows.map(([label, value]) => (
                    <React.Fragment key={label}>
                      <BasicLabel>{label}</BasicLabel>
                      <BasicValue>{value}</BasicValue>
                    </React.Fragment>
                  ))}
                </BasicBody>
                <HScrollFaint><ChevronRight size={14} strokeWidth={3} /></HScrollFaint>
              </BasicInner>
            </BasicPanel>
            <BlueBar $mt={3} />
            <GreyArea />
            <NoteBox />
            <BlueBar $h={25}>
              <SaveNote><SaveIcon />Save Note</SaveNote>
            </BlueBar>
          </RightCol>
        </Main>

        <StatusBar>
          <Magnifier />
          <span>Search Results</span>
        </StatusBar>

        <Dialog>
          <DialogTitle>Change Customer</DialogTitle>
          <DialogBody>
            <CurrentBanner>
              <CirclePerson size={15} />
              <span>Current Customer: Jay _Rayne Worep<br />(10191)</span>
            </CurrentBanner>
            <SearchRow>
              <SearchInput>wesuite</SearchInput>
              <GoButton>Go!</GoButton>
            </SearchRow>
            <OptionRow>
              <DefaultCheck />
              <DefaultLabel>Use Default Customer</DefaultLabel>
              <CreateButton>
                <GreenPlus />
                <CreateText>Create Customer</CreateText>
              </CreateButton>
            </OptionRow>
            <CustomerTree />
            <SelectBar>Please Select a Customer</SelectBar>
            <CustomerRow>
              <CirclePerson size={16} />
              <NodeLabel $ml={0}>Customer:</NodeLabel>
              <CustomerDash>---</CustomerDash>
            </CustomerRow>
            <DialogFooter>
              <OkButton><PinkCheck />OK</OkButton>
              <CancelButton><BrownX size={11} />Cancel</CancelButton>
            </DialogFooter>
          </DialogBody>
          <DialogStatus>
            <StatusChip><Magnifier size={16} />Search Results:</StatusChip>
          </DialogStatus>
        </Dialog>

        <Annotations />
      </Page>
    </>
  );
}
